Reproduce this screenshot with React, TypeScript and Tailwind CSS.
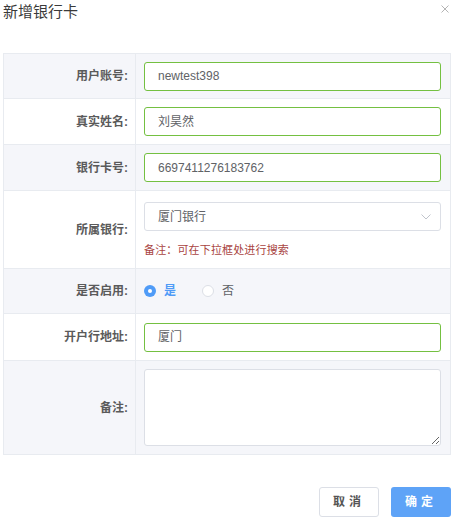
const font = "font-['Helvetica_Neue','Liberation_Sans','Noto_Sans_CJK_SC',sans-serif]";

function Row({ label, shaded, children, h }: { label: string; shaded?: boolean; children: React.ReactNode; h: string }) {
  return (
    <div className={`flex border-t border-[#e8ebf0] ${shaded ? "bg-[#f5f6fa]" : "bg-white"} ${h}`}>
      <div className="flex w-[132px] shrink-0 items-center justify-end border-r border-[#e8ebf0] pr-[7px] text-[12px] font-semibold text-[#5a5a5a]">
        {label}
      </div>
      <div className="flex flex-1 flex-col justify-center pl-[8px] pr-[9px]">{children}</div>
    </div>
  );
}

function TextInput({ value }: { value: string }) {
  return (
    <div className="flex h-[29px] items-center rounded-[3px] border border-[#74c041] bg-white pl-[13px] text-[12px] text-[#606266]">
      {value}
    </div>
  );
}

export default function App() {
  return (
    <div className={`relative h-[523px] w-[455px] bg-white ${font}`}>
      <div className="flex items-start justify-between pl-[3px] pr-[6px] pt-[1px]">
        <h2 className="text-[15px] leading-[22px] text-[#3a3a3a]">新增银行卡</h2>
        <svg className="mt-[4px]" width="8" height="8" viewBox="0 0 8 8" stroke="#b4b4b4" strokeWidth="1">
          <path d="M0.5 0.5 L7.5 7.5 M7.5 0.5 L0.5 7.5" />
        </svg>
      </div>

      <div className="ml-[3px] mr-[4px] mt-[30px] border-b border-l border-r border-[#e8ebf0]">
        <Row label="用户账号:" shaded h="h-[45px]">
          <TextInput value="newtest398" />
        </Row>
        <Row label="真实姓名:" h="h-[46px]">
          <TextInput value="刘昊然" />
        </Row>
        <Row label="银行卡号:" shaded h="h-[46px]">
          <TextInput value="6697411276183762" />
        </Row>
        <Row label="所属银行:" h="h-[78px]">
          <div className="flex h-[29px] items-center justify-between rounded-[3px] border border-[#dcdfe6] bg-white pl-[13px] pr-[9px] text-[12px] text-[#606266]">
            <span>厦门银行</span>
            <svg width="10" height="6" viewBox="0 0 10 6" fill="none" stroke="#c0c4cc" strokeWidth="1">
              <path d="M0.5 0.5 L5 5 L9.5 0.5" />
            </svg>
          </div>
          <div className="mt-[12px] text-[11px] leading-[14px] tracking-[0.15px] text-[#a94442]">备注：可在下拉框处进行搜索</div>
        </Row>
        <Row label="是否启用:" shaded h="h-[45px]">
          <div className="flex items-center text-[12px]">
            <span className="flex h-[12px] w-[12px] items-center justify-center rounded-full bg-[#4f9bf7]">
              <span className="h-[4px] w-[4px] rounded-full bg-white" />
            </span>
            <span className="ml-[8px] font-semibold text-[#4f9bf7]">是</span>
            <span className="ml-[26px] h-[12px] w-[12px] rounded-full border border-[#dcdfe6] bg-white" />
            <span className="ml-[8px] text-[#606266]">否</span>
          </div>
        </Row>
        <Row label="开户行地址:" h="h-[47px]">
          <TextInput value="厦门" />
        </Row>
        <Row label="备注:" shaded h="h-[94px]">
          <textarea className="h-[77px] resize-y rounded-[3px] border border-[#dcdfe6] bg-white outline-none" />
        </Row>
      </div>

      <div className="mr-[4px] mt-[32px] flex justify-end gap-[12px]">
        <button className="h-[30px] w-[60px] rounded-[3px] border border-[#dcdfe6] bg-white text-[12px] font-semibold tracking-[4px] text-[#555]">
          取消
        </button>
        <button className="h-[30px] w-[60px] rounded-[3px] bg-[#5ea3f7] text-[12px] font-semibold tracking-[4px] text-white">
          确定
        </button>
      </div>
    </div>
  );
}
